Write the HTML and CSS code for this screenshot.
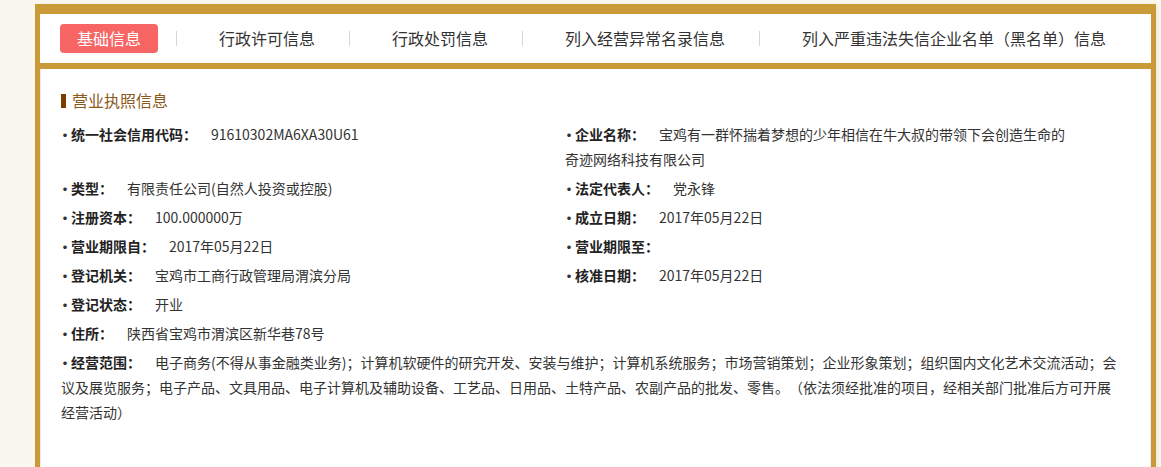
FILE: index.html
```html
<!DOCTYPE html>
<html lang="zh-CN">

<head>
    <meta charset="UTF-8">
    <title>企业信息</title>
    <link rel="stylesheet" href="styles.css">
</head>

<body>
    <div class="info_wrap">
        <!-- 顶部标签 -->
        <ul class="tab_bar">
            <li class="tab on">基础信息</li>
            <li class="tab_line"></li>
            <li class="tab">行政许可信息</li>
            <li class="tab_line"></li>
            <li class="tab">行政处罚信息</li>
            <li class="tab_line"></li>
            <li class="tab">列入经营异常名录信息</li>
            <li class="tab_line"></li>
            <li class="tab">列入严重违法失信企业名单（黑名单）信息</li>
        </ul>

        <div class="info_box">
            <h3 class="info_title">营业执照信息</h3>
            <ul class="info_list">
                <li><span class="dot">·</span><b>统一社会信用代码：</b><span class="val">91610302MA6XA30U61</span></li>
                <li><span class="dot">·</span><b>企业名称：</b><span class="val">宝鸡有一群怀揣着梦想的少年相信在牛大叔的带领下会创造生命的奇迹网络科技有限公司</span></li>
                <li><span class="dot">·</span><b>类型：</b><span class="val">有限责任公司(自然人投资或控股)</span></li>
                <li><span class="dot">·</span><b>法定代表人：</b><span class="val">党永锋</span></li>
                <li><span class="dot">·</span><b>注册资本：</b><span class="val">100.000000万</span></li>
                <li><span class="dot">·</span><b>成立日期：</b><span class="val">2017年05月22日</span></li>
                <li><span class="dot">·</span><b>营业期限自：</b><span class="val">2017年05月22日</span></li>
                <li><span class="dot">·</span><b>营业期限至：</b><span class="val"></span></li>
                <li><span class="dot">·</span><b>登记机关：</b><span class="val">宝鸡市工商行政管理局渭滨分局</span></li>
                <li><span class="dot">·</span><b>核准日期：</b><span class="val">2017年05月22日</span></li>
                <li class="full"><span class="dot">·</span><b>登记状态：</b><span class="val">开业</span></li>
                <li class="full"><span class="dot">·</span><b>住所：</b><span class="val">陕西省宝鸡市渭滨区新华巷78号</span></li>
                <li class="full"><span class="dot">·</span><b>经营范围：</b><span class="val">电子商务(不得从事金融类业务)；计算机软硬件的研究开发、安装与维护；计算机系统服务；市场营销策划；企业形象策划；组织国内文化艺术交流活动；会议及展览服务；电子产品、文具用品、电子计算机及辅助设备、工艺品、日用品、土特产品、农副产品的批发、零售。（依法须经批准的项目，经相关部门批准后方可开展经营活动）</span></li>
            </ul>
        </div>
    </div>
</body>

</html>
```

FILE: styles.css
```css
* {
    margin: 0px;
    padding: 0px;
    box-sizing: border-box;
}

body {
    background: #faf7ef;
    font-family: "Noto Sans CJK SC", sans-serif;
    font-size: 14px;
    color: #333333;
    text-spacing-trim: space-all;
}

ul {
    list-style: none;
}

.info_wrap {
    width: 1121px;
    margin: 4px 0 0 35px;
    border: 5px solid #ca9a38;
    border-top-width: 10px;
    background: white;
    box-shadow: 2px 0 4px rgba(0, 0, 0, 0.06);
}

/* 标签栏 */
.tab_bar {
    display: flex;
    align-items: center;
    height: 55px;
    padding-left: 20px;
    border-bottom: 6px solid #ca9a38;
}

.tab {
    padding: 0 17px;
    font-size: 16px;
    line-height: 29px;
    color: #333333;
    white-space: nowrap;
}

.tab.on {
    width: 98px;
    height: 29px;
    padding: 0;
    text-align: center;
    color: white;
    background-color: #f76565;
    border-radius: 4px;
}

.tab_line {
    width: 1px;
    height: 15px;
    margin: 0 25px 0 17px;
    background: #d6d6d6;
}

.tab.on + .tab_line {
    margin-left: 18px;
}

/* 内容 */
.info_box {
    min-height: 420px;
    padding: 21px 26px 40px 20px;
    border-left: 1px solid #ebebeb;
    border-right: 1px solid #ebebeb;
}

.info_title {
    font-size: 16px;
    font-weight: normal;
    line-height: 20px;
    color: #8c5a1c;
}

.info_title::before {
    content: "";
    display: inline-block;
    width: 5px;
    height: 14px;
    margin-right: 6px;
    vertical-align: -1px;
    background: #7a3e00;
}

.info_list {
    display: grid;
    grid-template-columns: 504px 509px 1fr;
    row-gap: 4px;
    margin-top: 12px;
}

.info_list li {
    grid-column: 1;
    line-height: 25px;
}

.info_list li:nth-child(even) {
    grid-column: 2;
}

.info_list li.full {
    grid-column: 1 / -1;
}

.dot {
    display: inline-block;
    width: 10px;
    text-indent: -3px;
    font-weight: bold;
}

.info_list b {
    color: #222222;
}

.val {
    margin-left: 14px;
}
```
